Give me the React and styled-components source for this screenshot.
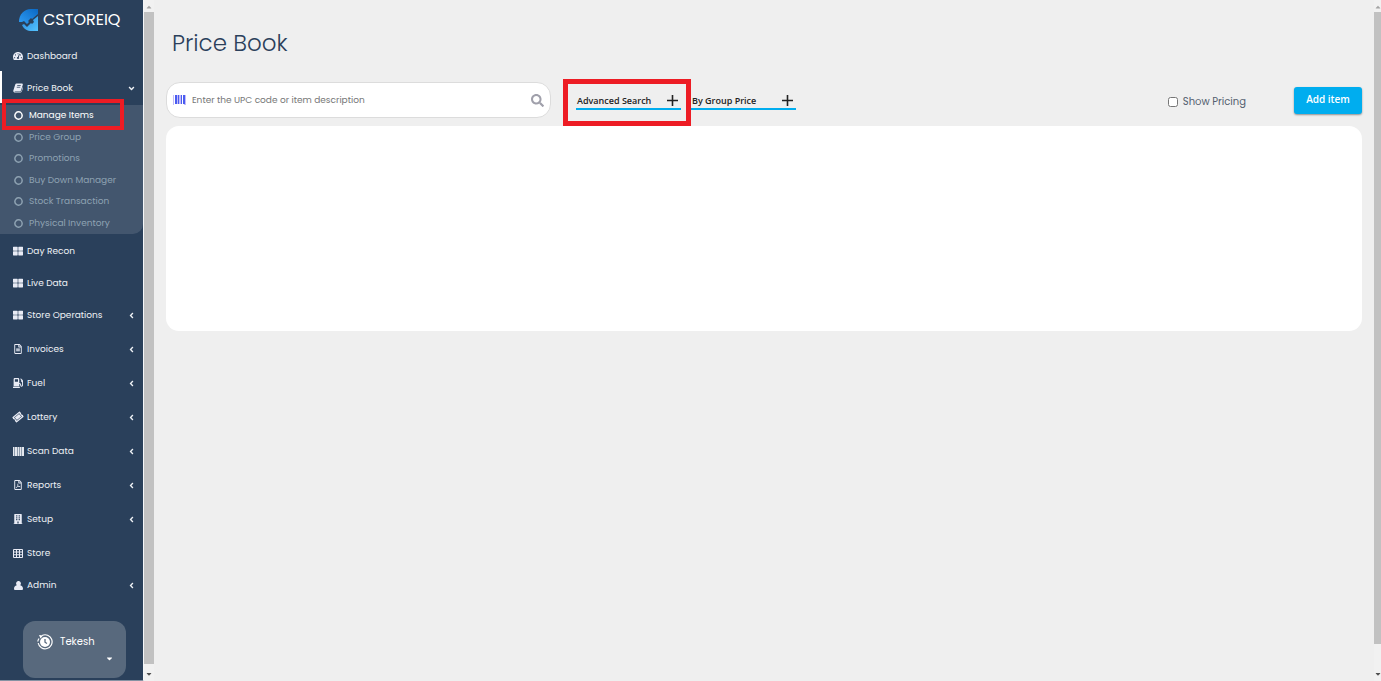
import styled, { createGlobalStyle } from "styled-components";
import { useState } from "react";
import {
    FaTachometerAlt,
    FaThLarge,
    FaRegFileAlt,
    FaGasPump,
    FaRegFilePdf,
    FaBuilding,
    FaTicketAlt,
    FaSearch,
    FaAngleLeft,
    FaAngleDown,
    FaCaretDown,
    FaCaretUp,
} from "react-icons/fa";

const GlobalStyle = createGlobalStyle`
    * {
        box-sizing: border-box;
    }
    body {
        margin: 0;
        background: #efefef;
        font-family: Poppins, Inter, "Liberation Sans", sans-serif;
    }
    button, input {
        font-family: inherit;
    }
`;

const Page = styled.div`
    display: flex;
    min-height: 100vh;
`;

const Sidebar = styled.aside`
    width: 144px;
    flex-shrink: 0;
    background: #2a405b;
    border-right: 1px solid #f4f6f8;
    border-bottom: 2px solid #8592a3;
    display: flex;
    flex-direction: column;
`;

const Logo = styled.a`
    display: flex;
    align-items: center;
    gap: 4px;
    height: 39px;
    padding-left: 19px;
    color: #fff;
    font-size: 16px;
    text-decoration: none;
`;

const Menu = styled.nav`
    display: flex;
    flex-direction: column;
`;

// parents are a little taller than plain links
const MenuItem = styled.a`
    display: flex;
    align-items: center;
    gap: 3px;
    width: 100%;
    height: ${(p) => (p.$parent ? "34px" : "32px")};
    padding: ${(p) => (p.$parent ? "0" : "2px")} 7px 0 12px;
    background: ${(p) =>
        p.$active ? "linear-gradient(#fff, #fff) 0 0 / 2px 32px no-repeat" : "none"};
    border: none;
    color: #eef1f5;
    font-size: 9px;
    text-align: left;
    text-decoration: none;
    white-space: nowrap;
    cursor: pointer;
`;

const MenuIcon = styled.span`
    display: flex;
    justify-content: center;
    width: 12px;
    font-size: 10px;
    color: #e8ebf5;
`;

const MenuLabel = styled.span`
    flex: 1;
`;

const SubMenu = styled.div`
    display: flex;
    flex-direction: column;
    height: 129px;
    background: #43566e;
    border-radius: 0 0 10px 0;
`;

const SubItem = styled.a`
    position: relative;
    flex: 1;
    display: flex;
    align-items: center;
    gap: 6px;
    padding-left: 14px;
    color: ${(p) => (p.$active ? "#fff" : "#8ea2b2")};
    font-size: 9px;
    text-decoration: none;
    white-space: nowrap;
`;

const Highlight = styled.span`
    position: absolute;
    inset: ${(p) => p.$inset};
    border: ${(p) => p.$weight}px solid #ed1c24;
    pointer-events: none;
    z-index: 1;
`;

const UserCard = styled.button`
    display: grid;
    grid-template-columns: 16px 1fr;
    column-gap: 7px;
    align-items: center;
    align-content: start;
    width: 103px;
    height: 57px;
    margin: 19px 0 2px 23px;
    padding: 13px 12px 0 14px;
    border: none;
    border-radius: 12px;
    background: #58697d;
    color: #fff;
    font-size: 10px;
    text-align: left;
    cursor: pointer;
`;

const CardCaret = styled.span`
    grid-column: 2;
    display: flex;
    justify-content: flex-end;
    margin-top: 4px;
    font-size: 9px;
`;

const ScrollTrack = styled.div`
    width: ${(p) => p.$width};
    flex-shrink: 0;
    display: flex;
    flex-direction: column;
    align-items: center;
    background: #f1f1f1;
    font-size: 8px;
    overflow: hidden;
`;

const ScrollThumb = styled.div`
    flex: 1;
    width: 100%;
    margin: ${(p) => p.$margin};
    background: #c1c1c1;
`;

const ArrowUp = styled(FaCaretUp)`
    color: #a3a3a3;
    margin-top: 3px;
`;

const ArrowDown = styled(FaCaretDown)`
    color: #505050;
    margin-bottom: 4px;
`;

const Main = styled.main`
    flex: 1;
    min-width: 0;
    padding: 0 12px;
`;

const Title = styled.h1`
    margin: 0;
    padding: 25px 0 21px 6px;
    color: #2b405b;
    font-size: 23px;
    line-height: 36px;
    font-weight: 300;
`;

const Toolbar = styled.div`
    display: flex;
    align-items: center;
    height: 36px;
    margin-bottom: 8px;
`;

const SearchBox = styled.label`
    display: flex;
    align-items: center;
    gap: 6px;
    width: 385px;
    height: 36px;
    padding: 0 6px;
    background: #fff;
    border: 1px solid #dcdcdc;
    border-radius: 14px;
`;

const SearchInput = styled.input`
    flex: 1;
    min-width: 0;
    padding: 0;
    border: none;
    outline: none;
    background: none;
    color: #555;
    font-size: 9px;
    &::placeholder {
        color: #777;
        opacity: 1;
    }
`;

const SearchButton = styled.button`
    display: flex;
    padding: 0;
    border: none;
    background: none;
    color: #a0a0ab;
    font-size: 13px;
    cursor: pointer;
`;

const Filters = styled.div`
    display: flex;
    gap: 10px;
    margin-left: 25px;
`;

const FilterButton = styled.button`
    position: relative;
    display: flex;
    align-items: center;
    justify-content: space-between;
    width: 105px;
    height: 20px;
    padding: 2px 3px 0 1px;
    border: none;
    border-bottom: 2px solid #00adef;
    background: none;
    color: #222;
    font-family: "Open Sans", sans-serif;
    font-size: 9px;
    font-weight: 600;
    white-space: nowrap;
    cursor: pointer;
`;

const Pricing = styled.label`
    display: flex;
    align-items: center;
    gap: 5px;
    margin: 3px 48px 0 auto;
    color: #555f70;
    font-size: 10px;
`;

const Checkbox = styled.input`
    width: 10px;
    height: 10px;
    margin: 0;
`;

const AddButton = styled.button`
    width: 68px;
    height: 27px;
    padding: 0 0 2px;
    border: none;
    border-radius: 3px;
    background: #00adef;
    box-shadow: 0 1px 2px rgba(0, 0, 0, 0.4);
    color: #fff;
    font-family: "Open Sans", sans-serif;
    font-size: 10px;
    font-weight: 600;
    cursor: pointer;
`;

const Results = styled.section`
    height: 205px;
    background: #fff;
    border-radius: 13px;
`;

const TicketIcon = styled(FaTicketAlt)`
    transform: rotate(-40deg);
`;

const LogoMark = () => (
    <svg width="20" height="22" viewBox="0 0 20 22" aria-hidden="true">
        <defs>
            <linearGradient id="markTop" x1="0" y1="1" x2="1" y2="0">
                <stop offset="0" stopColor="#2f9df5" />
                <stop offset="1" stopColor="#0a68c4" />
            </linearGradient>
            <linearGradient id="markLow" x1="0" y1="0" x2="1" y2="1">
                <stop offset="0" stopColor="#2586e0" />
                <stop offset="1" stopColor="#55c4ff" />
            </linearGradient>
        </defs>
        <path d="M19 0H12C5 0 0 5.500 0 13h3l2-1 3 3 2-2-1-1 3-3 1 1 6-5z" fill="url(#markTop)" />
        <path d="M3 16l2-1 3 3 4-4 1 1 2-2-1-2 5-4v15h-6C8 22 5 20 3 16z" fill="url(#markLow)" />
    </svg>
);

const RingIcon = () => (
    <svg width="9" height="9" viewBox="0 0 18 18" aria-hidden="true">
        <circle cx="9" cy="9" r="7.300" fill="none" stroke="currentColor" strokeWidth="3" />
    </svg>
);

const BookIcon = () => (
    <svg width="10" height="10" viewBox="0 0 20 20" aria-hidden="true">
        <path
            d="M7 1h11c1 0 2 1 1.600 2.300L16 15c-.4 1-1 1.500-2 1.500H4c-1 0-1 1 0 1h11c1 0 1.500-.4 2-1.400l2.500-8c.8.600.7 1.500.4 2.400L17.500 17c-.5 1.400-1.500 2-3 2H4c-2.500 0-4-2-3.300-4L4.500 3C5 1.700 5.700 1 7 1z"
            fill="currentColor"
        />
        <path d="M8.500 5h7M7.500 8.500h7" stroke="#2a405b" strokeWidth="1.500" />
    </svg>
);

const ScanIcon = () => (
    <svg width="11" height="9" viewBox="0 0 11 9" aria-hidden="true">
        <path d="M0 0h11v9H0z" fill="#8d9bac" />
        <path d="M0 0h1v9H0zM2 0h2v9H2zM5 0h1v9H5zM7 0h1v9H7zM9 0h2v9H9z" fill="#e3e7ee" />
    </svg>
);

const TableIcon = () => (
    <svg width="10" height="9" viewBox="0 0 20 18" aria-hidden="true">
        <path
            d="M1 1h18v16H1zM1 6h18M1 11.500h18M7 1v16M13 1v16"
            fill="none"
            stroke="currentColor"
            strokeWidth="2"
        />
    </svg>
);

const PersonIcon = () => (
    <svg width="9" height="9" viewBox="0 0 18 18" aria-hidden="true">
        <path
            d="M9 0a4.500 5 0 0 1 3.500 8.500C16 9 18 12 18 15.500c0 1.500-1 2.500-2.500 2.500h-13C1 18 0 17 0 15.500 0 12 2 9 5.500 8.500A4.500 5 0 0 1 9 0z"
            fill="currentColor"
        />
    </svg>
);

const BarcodeIcon = () => (
    <svg width="13" height="10" viewBox="0 0 13 10" aria-hidden="true">
        <path d="M0 0h1v10H0zM4 0h1v9H4zM6 0h2v9H6zM11 0h2v10h-2z" fill="#c3bcf8" />
        <path d="M2 0h2v9H2zM5 0h1v9H5zM8 0h1v9H8zM10 0h2v9h-2z" fill="#4a5cf0" />
    </svg>
);

const PlusIcon = () => (
    <svg width="11" height="11" viewBox="0 0 11 11" aria-hidden="true">
        <path d="M5.500 0v11M0 5.500h11" stroke="#222" strokeWidth="1.600" />
    </svg>
);

const ClockIcon = () => (
    <svg width="16" height="16" viewBox="0 0 16 16" aria-hidden="true">
        <path d="M5 1.500A7 7 0 1 1 1.200 9" fill="none" stroke="#fff" strokeWidth="1.200" />
        <path d="M.8 7.500A7 7 0 0 1 2 4.500" fill="none" stroke="#fff" strokeWidth="1.200" />
        <path d="M2 1l4 .5L3.500 4.500z" fill="#fff" />
        <circle cx="8" cy="8" r="5" fill="#fff" />
        <path d="M8 5v3.200l2 1.300" fill="none" stroke="#58697d" strokeWidth="1.300" />
    </svg>
);

const priceBookPages = [
    "Manage Items",
    "Price Group",
    "Promotions",
    "Buy Down Manager",
    "Stock Transaction",
    "Physical Inventory",
];

const menuItems = [
    { label: "Day Recon", icon: <FaThLarge /> },
    { label: "Live Data", icon: <FaThLarge /> },
    { label: "Store Operations", icon: <FaThLarge />, parent: true },
    { label: "Invoices", icon: <FaRegFileAlt />, parent: true },
    { label: "Fuel", icon: <FaGasPump />, parent: true },
    { label: "Lottery", icon: <TicketIcon />, parent: true },
    { label: "Scan Data", icon: <ScanIcon />, parent: true },
    { label: "Reports", icon: <FaRegFilePdf />, parent: true },
    { label: "Setup", icon: <FaBuilding />, parent: true },
    { label: "Store", icon: <TableIcon /> },
    { label: "Admin", icon: <PersonIcon />, parent: true },
];

const SideNav = () => (
    <Sidebar>
        <Logo href="#home">
            <LogoMark />
            CSTOREIQ
        </Logo>
        <Menu>
            <MenuItem href="#dashboard">
                <MenuIcon><FaTachometerAlt /></MenuIcon>
                <MenuLabel>Dashboard</MenuLabel>
            </MenuItem>
            <MenuItem as="button" $parent $active>
                <MenuIcon><BookIcon /></MenuIcon>
                <MenuLabel>Price Book</MenuLabel>
                <FaAngleDown />
            </MenuItem>
            <SubMenu>
                {priceBookPages.map((page, i) => (
                    <SubItem key={page} href="#price-book" $active={i === 0}>
                        <RingIcon />
                        {page}
                        {i === 0 && <Highlight $inset="-6px 19px -3px 2px" $weight={4} />}
                    </SubItem>
                ))}
            </SubMenu>
            {menuItems.map((item) => (
                <MenuItem
                    key={item.label}
                    as={item.parent ? "button" : "a"}
                    href={item.parent ? undefined : "#page"}
                    $parent={item.parent}
                >
                    <MenuIcon>{item.icon}</MenuIcon>
                    <MenuLabel>{item.label}</MenuLabel>
                    {item.parent && <FaAngleLeft />}
                </MenuItem>
            ))}
        </Menu>
        <UserCard>
            <ClockIcon />
            <span>Tekesh</span>
            <CardCaret><FaCaretDown /></CardCaret>
        </UserCard>
    </Sidebar>
);

const App = () => {
    const [query, setQuery] = useState("");
    const [showPricing, setShowPricing] = useState(false);

    return (
        <Page>
            <GlobalStyle />
            <SideNav />
            <ScrollTrack $width="10px">
                <ArrowUp />
                <ScrollThumb $margin="1px 0 6px" />
                <ArrowDown />
            </ScrollTrack>
            <Main>
                <Title>Price Book</Title>
                <Toolbar>
                    <SearchBox>
                        <BarcodeIcon />
                        <SearchInput
                            value={query}
                            onChange={(e) => setQuery(e.target.value)}
                            placeholder="Enter the UPC code or item description"
                            aria-label="Search items"
                        />
                        <SearchButton aria-label="Search"><FaSearch /></SearchButton>
                    </SearchBox>
                    <Filters>
                        <FilterButton>
                            Advanced Search
                            <PlusIcon />
                            <Highlight $inset="-11px -10px -18px -13px" $weight={5} />
                        </FilterButton>
                        <FilterButton>
                            By Group Price
                            <PlusIcon />
                        </FilterButton>
                    </Filters>
                    <Pricing>
                        <Checkbox
                            type="checkbox"
                            checked={showPricing}
                            onChange={(e) => setShowPricing(e.target.checked)}
                        />
                        Show Pricing
                    </Pricing>
                    <AddButton>Add item</AddButton>
                </Toolbar>
                <Results />
            </Main>
            <ScrollTrack $width="7px">
                <ArrowUp />
                <ScrollThumb $margin="1px 0 26px" />
                <ArrowDown />
            </ScrollTrack>
        </Page>
    );
};

export default App;
